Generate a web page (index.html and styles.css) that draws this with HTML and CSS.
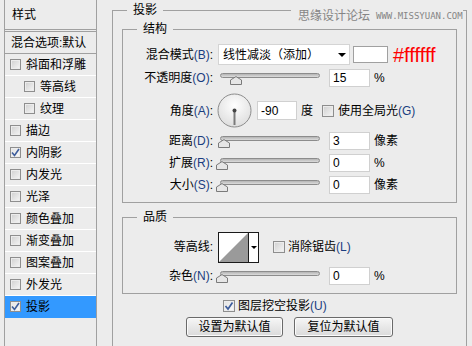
FILE: index.html
```html
<!DOCTYPE html>
<html lang="zh-CN">
<head>
  <meta charset="UTF-8" />
  <meta name="viewport" content="width=device-width, initial-scale=1.0"/>
  <title>图层样式 - 投影</title>
  <link rel="stylesheet" href="styles.css">
</head>
<body>
  <div class="dialog">
    <ul class="style-list">
      <li class="list-head">样式</li>
      <li class="list-blend">混合选项:默认</li>
      <li><span class="cb"></span>斜面和浮雕</li>
      <li class="sub"><span class="cb"></span>等高线</li>
      <li class="sub"><span class="cb"></span>纹理</li>
      <li><span class="cb"></span>描边</li>
      <li><span class="cb on"><svg width="9" height="9" viewBox="0 0 9 9"><path d="M1 4.5L3.5 7.5L8 1" fill="none" stroke="#3d5d9c" stroke-width="1.6"/></svg></span>内阴影</li>
      <li><span class="cb"></span>内发光</li>
      <li><span class="cb"></span>光泽</li>
      <li><span class="cb"></span>颜色叠加</li>
      <li><span class="cb"></span>渐变叠加</li>
      <li><span class="cb"></span>图案叠加</li>
      <li><span class="cb"></span>外发光</li>
      <li class="active"><span class="cb on"><svg width="9" height="9" viewBox="0 0 9 9"><path d="M1 4.5L3.5 7.5L8 1" fill="none" stroke="#3d5d9c" stroke-width="1.6"/></svg></span>投影</li>
    </ul>

    <div class="main">
      <div class="watermark">思缘设计论坛<span>WWW.MISSYUAN.COM</span></div>

      <fieldset class="box outer">
        <legend>投影</legend>

        <fieldset class="box inner struct">
          <legend>结构</legend>

          <div class="row r1">
            <label class="lbl">混合模式<span class="key">(B)</span>:</label>
            <div class="select">线性减淡（添加）<i class="caret"></i></div>
            <span class="swatch"></span>
            <span class="hex">#ffffff</span>
          </div>

          <div class="row r2">
            <label class="lbl">不透明度<span class="key">(O)</span>:</label>
            <div class="slider"><div class="track"></div><span class="thumb" style="left: 14px"><svg width="12" height="9" viewBox="0 0 12 9"><path d="M0.5 8.5V4L6 0.6L11.5 4V8.5Z" fill="#e6e6e6" stroke="#7a7a7a"/></svg></span></div>
            <input class="num" value="15">
            <span class="unit">%</span>
          </div>

          <div class="row r3">
            <label class="lbl">角度<span class="key">(A)</span>:</label>
            <svg class="dial" width="35" height="35" viewBox="0 0 35 35">
              <defs>
                <radialGradient id="dialFill" cx="50%" cy="35%" r="65%">
                  <stop offset="0" stop-color="#ffffff"/>
                  <stop offset="1" stop-color="#dedede"/>
                </radialGradient>
              </defs>
              <circle cx="17.5" cy="17.5" r="16.5" fill="url(#dialFill)" stroke="#8c8c8c"/>
              <line x1="17.5" y1="17.5" x2="17.5" y2="32" stroke="#7a7a7a" stroke-width="2"/>
              <circle cx="17.5" cy="17.5" r="2" fill="#444"/>
            </svg>
            <input class="num angle" value="-90">
            <span class="unit">度</span>
            <span class="check"><span class="cb big"></span>使用全局光<span class="key">(G)</span></span>
          </div>

          <div class="row r4">
            <label class="lbl">距离<span class="key">(D)</span>:</label>
            <div class="slider"><div class="track"></div><span class="thumb" style="left: 2px"><svg width="12" height="9" viewBox="0 0 12 9"><path d="M0.5 8.5V4L6 0.6L11.5 4V8.5Z" fill="#e6e6e6" stroke="#7a7a7a"/></svg></span></div>
            <input class="num" value="3">
            <span class="unit">像素</span>
          </div>

          <div class="row r5">
            <label class="lbl">扩展<span class="key">(R)</span>:</label>
            <div class="slider"><div class="track"></div><span class="thumb" style="left: 0px"><svg width="12" height="9" viewBox="0 0 12 9"><path d="M0.5 8.5V4L6 0.6L11.5 4V8.5Z" fill="#e6e6e6" stroke="#7a7a7a"/></svg></span></div>
            <input class="num" value="0">
            <span class="unit">%</span>
          </div>

          <div class="row r6">
            <label class="lbl">大小<span class="key">(S)</span>:</label>
            <div class="slider"><div class="track"></div><span class="thumb" style="left: 0px"><svg width="12" height="9" viewBox="0 0 12 9"><path d="M0.5 8.5V4L6 0.6L11.5 4V8.5Z" fill="#e6e6e6" stroke="#7a7a7a"/></svg></span></div>
            <input class="num" value="0">
            <span class="unit">像素</span>
          </div>
        </fieldset>

        <fieldset class="box inner quality">
          <legend>品质</legend>

          <div class="row q1">
            <label class="lbl">等高线:</label>
            <div class="contour">
              <svg width="29" height="29" viewBox="0 0 29 29"><path d="M0 29L29 0V29Z" fill="#9a9a9a"/></svg>
              <span class="contour-drop"><i class="caret small"></i></span>
            </div>
            <span class="check aa"><span class="cb big"></span>消除锯齿<span class="key">(L)</span></span>
          </div>

          <div class="row q2">
            <label class="lbl">杂色<span class="key">(N)</span>:</label>
            <div class="slider"><div class="track"></div><span class="thumb" style="left: 0px"><svg width="12" height="9" viewBox="0 0 12 9"><path d="M0.5 8.5V4L6 0.6L11.5 4V8.5Z" fill="#e6e6e6" stroke="#7a7a7a"/></svg></span></div>
            <input class="num" value="0">
            <span class="unit">%</span>
          </div>
        </fieldset>

        <div class="knockout"><span class="cb big on"><svg width="10" height="10" viewBox="0 0 10 10"><path d="M1.5 5L4 8L8.5 1.5" fill="none" stroke="#3d5d9c" stroke-width="1.7"/></svg></span>图层挖空投影<span class="key">(U)</span></div>

        <div class="actions">
          <button class="btn">设置为默认值</button>
          <button class="btn wide">复位为默认值</button>
        </div>
      </fieldset>
    </div>
  </div>
</body>
</html>
```

FILE: styles.css
```css
* { box-sizing: border-box; }
body { margin: 0; height: 346px; overflow: hidden; background: #ececec; color: #000; font: 12px/16px "Liberation Sans", "Noto Sans CJK SC", sans-serif; }
.dialog { display: flex; align-items: flex-start; height: 346px; overflow: hidden; padding-left: 4px; }

/* left style list */
.style-list { list-style: none; margin: 0; padding: 0; width: 93px; height: 346px; flex: none; border-left: 1px solid #a0a0a0; border-right: 1px solid #a0a0a0; }
.style-list li { display: flex; align-items: center; height: 22px; padding-left: 5px; border-bottom: 1px solid #fff; white-space: nowrap; }
.style-list li .cb { margin-right: 5px; }
.style-list .sub { padding-left: 19px; }
.style-list .list-head { height: 32px; padding-left: 7px; border-bottom: 3px double #a0a0a0; }
.style-list .list-blend { padding-left: 6px; border-bottom-color: #a0a0a0; }
.style-list .active { background: #3399ff; border-bottom-color: #3399ff; }

.cb { display: inline-flex; align-items: center; justify-content: center; width: 11px; height: 11px; flex: none; border: 1px solid #8e8e8e; background: linear-gradient(135deg, #cfcfcf, #f6f6f6); box-shadow: inset 0 0 0 1px #ececec; }
.cb.big { width: 12px; height: 12px; }
.cb.on { background: linear-gradient(135deg, #e2e2e2, #fafafa); }

/* right side */
.main { position: relative; margin-left: 15px; }
.watermark { position: absolute; top: 8px; left: 179px; display: flex; align-items: center; padding-left: 7px; background: #ececec; color: #858585; white-space: nowrap; }
.watermark span { margin-left: 6px; font: 9px/16px "DejaVu Sans Mono", monospace; }

.box { margin: 0; padding: 0; min-width: 0; border: 1px solid #a0a0a0; }
.box legend { padding: 0 6px; line-height: 16px; }
.outer { width: 355px; margin-top: 2px; padding: 0 9px 20px; }
.outer > legend { margin-left: 5px; }
.inner > legend { margin-left: 14px; }
.struct { margin-top: 3px; padding: 7px 0 5px; }
.quality { margin-top: 6px; padding: 4px 0 6px; }

.row { display: flex; align-items: center; }
.r1 { height: 21px; }
.r2 { height: 26px; }
.r3 { height: 39px; }
.r4 { height: 22px; }
.r5 { height: 21px; }
.r6 { height: 24px; }
.q1 { height: 36px; }
.q2 { height: 22px; }

.lbl { width: 90px; flex: none; text-align: right; white-space: nowrap; }
.key { color: #1a3d80; }

.select { display: flex; align-items: center; justify-content: space-between; width: 132px; height: 21px; margin-left: 5px; padding: 0 3px 0 4px; background: #fff; border: 1px solid #d4d4d4; }
.caret { width: 0; height: 0; border-left: 4px solid transparent; border-right: 4px solid transparent; border-top: 4px solid #000; }
.caret.small { border-left-width: 3px; border-right-width: 3px; border-top-width: 3px; }
.swatch { width: 35px; height: 17px; margin-left: 3px; background: #fff; border: 1px solid #a0a0a0; }
.hex { margin-left: 5px; color: #ff0000; font: 20px/20px "Liberation Sans", sans-serif; }

.slider { position: relative; width: 104px; height: 18px; margin-left: 3px; flex: none; }
.track { height: 5px; margin: 4px 0 0 4px; border: 1px solid #8c8c8c; border-radius: 3px; background: linear-gradient(#b4b4b4, #dcdcdc); }
.thumb { position: absolute; top: 7px; display: flex; }

.num { width: 41px; height: 18px; margin: 0 0 0 9px; padding: 0 3px; border: 1px solid #d0d0d0; background: #fff; color: #000; font: 12px "Liberation Sans", sans-serif; outline: none; }
.num.angle { width: 40px; height: 19px; margin-left: 5px; }
.unit { margin-left: 4px; }
.dial { margin-left: 4px; flex: none; }

.check { display: flex; align-items: center; margin-left: 9px; white-space: nowrap; }
.check .cb { margin-right: 4px; }
.check.aa { margin-left: 14px; }
.check.aa .cb { margin-right: 3px; }

.contour { display: flex; width: 41px; height: 31px; margin-left: 5px; background: #fff; border: 1px solid #1a1a1a; }
.contour-drop { display: flex; align-items: center; justify-content: center; width: 10px; border-left: 1px solid #1a1a1a; }

.knockout { display: flex; align-items: center; height: 14px; margin-top: 5px; padding-left: 101px; white-space: nowrap; }
.knockout .cb { margin-right: 3px; }

.actions { display: flex; justify-content: center; gap: 11px; margin-top: 4px; }
.btn { width: 97px; height: 20px; padding: 0; border: 1px solid #6a6a6a; border-radius: 3px; background: linear-gradient(#f6f6f6, #dadada); box-shadow: inset 0 0 0 1px #fbfbfb; color: #000; font: 12px/16px "Liberation Sans", "Noto Sans CJK SC", sans-serif; }
.btn.wide { width: 99px; }
```
